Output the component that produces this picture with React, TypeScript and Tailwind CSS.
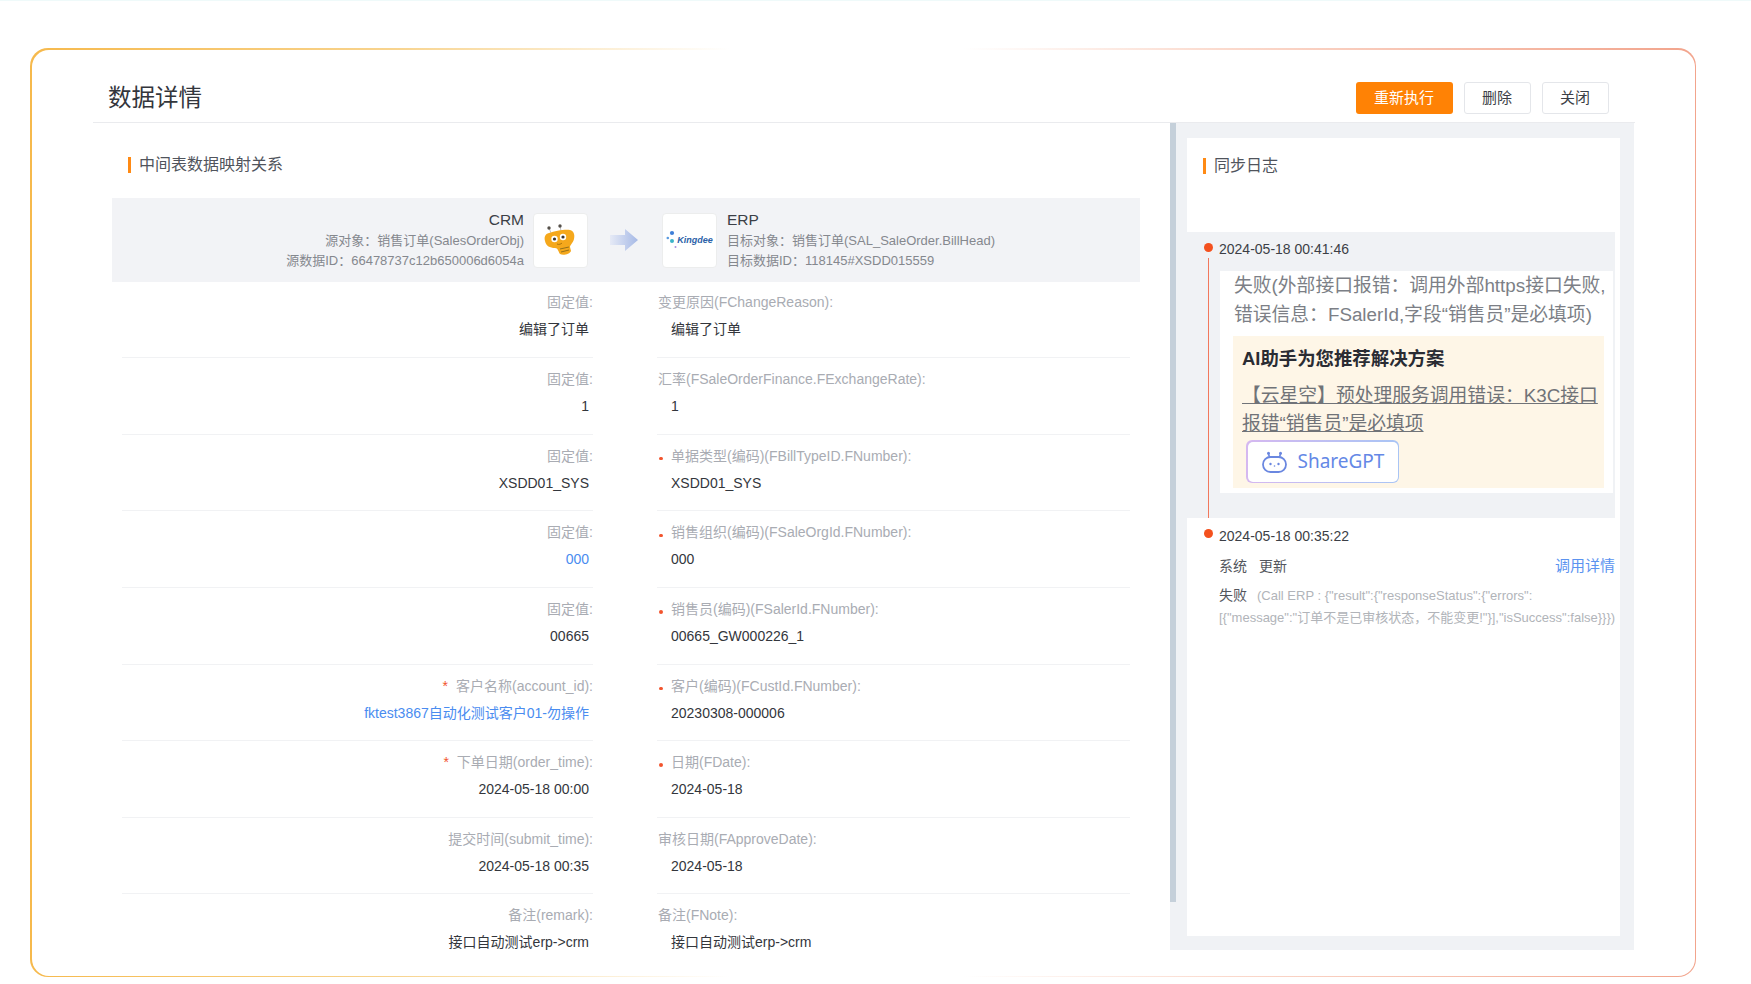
import React from "react";

const font = "font-['Liberation_Sans','Noto_Sans_CJK_SC',sans-serif]";

type Row = {
  leftLabel: string;
  leftValue: string;
  leftReq?: boolean;
  leftBlue?: boolean;
  rightLabel: string;
  rightValue: string;
  rightReq?: boolean;
};

const rows: Row[] = [
  { leftLabel: "固定值:", leftValue: "编辑了订单", rightLabel: "变更原因(FChangeReason):", rightValue: "编辑了订单" },
  { leftLabel: "固定值:", leftValue: "1", rightLabel: "汇率(FSaleOrderFinance.FExchangeRate):", rightValue: "1" },
  { leftLabel: "固定值:", leftValue: "XSDD01_SYS", rightLabel: "单据类型(编码)(FBillTypeID.FNumber):", rightValue: "XSDD01_SYS", rightReq: true },
  { leftLabel: "固定值:", leftValue: "000", leftBlue: true, rightLabel: "销售组织(编码)(FSaleOrgId.FNumber):", rightValue: "000", rightReq: true },
  { leftLabel: "固定值:", leftValue: "00665", rightLabel: "销售员(编码)(FSalerId.FNumber):", rightValue: "00665_GW000226_1", rightReq: true },
  { leftLabel: "客户名称(account_id):", leftValue: "fktest3867自动化测试客户01-勿操作", leftReq: true, leftBlue: true, rightLabel: "客户(编码)(FCustId.FNumber):", rightValue: "20230308-000006", rightReq: true },
  { leftLabel: "下单日期(order_time):", leftValue: "2024-05-18 00:00", leftReq: true, rightLabel: "日期(FDate):", rightValue: "2024-05-18", rightReq: true },
  { leftLabel: "提交时间(submit_time):", leftValue: "2024-05-18 00:35", rightLabel: "审核日期(FApproveDate):", rightValue: "2024-05-18" },
  { leftLabel: "备注(remark):", leftValue: "接口自动测试erp->crm", rightLabel: "备注(FNote):", rightValue: "接口自动测试erp->crm" },
];

function SectionTitle({ text }: { text: string }) {
  return (
    <div className="flex items-center gap-[8px] h-[16px]">
      <span className="w-[3px] h-[16px] bg-[#ff8a14]" />
      <span className="text-[16px] leading-[16px] text-[#50545c]">{text}</span>
    </div>
  );
}

function BeeLogo() {
  return (
    <svg width="53" height="53" viewBox="1 1 53 53">
      <path d="M16 15 L18 20 M27 13 L28 18" stroke="#a8a8a8" strokeWidth="0.7" />
      <circle cx="16" cy="15" r="1.7" fill="#55504a" />
      <circle cx="27" cy="13" r="1.7" fill="#55504a" />
      <path d="M16 20 C22 18 32 16 37 17 C41 18 42 22 41 26 C40 30 37 32 37 34 L38 38 C37 41 30 43 27 41 C25 38 25 35 22 35 C17 35 13 33 12 28 C11 24 12 21 16 20 Z" fill="#f5a81c" />
      <circle cx="21.5" cy="26" r="3.2" fill="#fff" />
      <circle cx="30" cy="24" r="3.2" fill="#fff" />
      <circle cx="21.5" cy="26" r="1.6" fill="#3a3530" />
      <circle cx="30" cy="24" r="1.6" fill="#3a3530" />
      <path d="M24 31 C26 32 28 31 29 30" stroke="#a56d08" strokeWidth="0.9" fill="none" />
      <path d="M27 36 L36 34 M28 39 L36 37" stroke="#8a6a1a" strokeWidth="0.9" />
    </svg>
  );
}

function KingdeeLogo() {
  return (
    <div className="flex items-center">
      <svg width="11" height="20" viewBox="0 0 11 20" className="shrink-0">
        <circle cx="6" cy="3" r="2.1" fill="#3f7fd8" />
        <circle cx="1.8" cy="8" r="1.3" fill="#5a9ae0" />
        <circle cx="6" cy="11" r="2" fill="#3cb4c8" />
        <circle cx="9.5" cy="17" r="1" fill="#a98fe0" />
      </svg>
      <span className="italic font-bold text-[9px] leading-none text-[#2a5fa8] font-['Liberation_Sans',sans-serif]">Kingdee</span>
    </div>
  );
}

function BotIcon() {
  return (
    <svg width="25" height="22" viewBox="0 0 25 22" fill="none">
      <path d="M7.5 6 L6.5 3 M17.5 6 L18.5 3" stroke="#6a87e0" strokeWidth="1.6" />
      <circle cx="6.5" cy="2.2" r="1.5" fill="#6a87e0" />
      <circle cx="18.5" cy="2.2" r="1.5" fill="#6a87e0" />
      <rect x="1" y="6" width="23" height="15" rx="7.5" stroke="#6a87e0" strokeWidth="1.8" />
      <circle cx="8.5" cy="13" r="1.2" fill="#6a87e0" />
      <circle cx="16.5" cy="13" r="1.2" fill="#6a87e0" />
      <circle cx="12.5" cy="15" r="0.8" fill="#6a87e0" />
    </svg>
  );
}

function MappingRow({ row, first }: { row: Row; first: boolean }) {
  const height = first ? "h-[76px] pt-[10px]" : "h-[76.65px] pt-[11px]";
  return (
    <div className="flex gap-[64px] ml-[29px]">
      <div className={`w-[471px] ${height} border-b border-[#f1f2f4] text-right`}>
        <div className="text-[14px] leading-[20px] text-[#a9acb3]">
          {row.leftReq && <span className="text-[#f2542d] mr-[8px]">*</span>}
          {row.leftLabel}
        </div>
        <div className={`mt-[7px] pr-[4px] text-[14px] leading-[20px] whitespace-nowrap ${row.leftBlue ? "text-[#4a8cf0]" : "text-[#33363c]"}`}>
          {row.leftValue}
        </div>
      </div>
      <div className={`w-[473px] ${height} border-b border-[#f1f2f4] pl-[1px]`}>
        <div className="flex items-center text-[14px] leading-[20px] text-[#a9acb3]">
          {row.rightReq && <span className="w-[3.5px] h-[3.5px] mt-[6px] mr-[8.5px] ml-[1px] rounded-full bg-[#f2542d]" />}
          {row.rightLabel}
        </div>
        <div className="mt-[7px] pl-[13px] text-[14px] leading-[20px] text-[#33363c]">{row.rightValue}</div>
      </div>
    </div>
  );
}

export default function App() {
  return (
    <div className={`h-[984px] w-[1751px] overflow-hidden bg-white border-t border-[#effafa] pt-[47px] pl-[30px] ${font}`}>
      {/* border is a gradient showing through the padding */}
      <div className="w-[1666px] h-[929px] rounded-[18px] p-[1.5px] bg-[linear-gradient(to_right,#f6b94c_0%,#f8d48f_22%,#ffffff_42%,#ffffff_56%,#fbd9cc_72%,#f2a48c_100%)]">
        <div className="w-full h-full rounded-[17px] bg-white pl-[61.5px] pr-[60px]">
          <div className="flex items-center justify-between h-[73.5px] border-b border-[#eaebee]">
            <h1 className="ml-[15px] mt-[24px] text-[23.5px] leading-[30px] text-[#33363c]">数据详情</h1>
            <div className="flex gap-[11px] mr-[26px] mt-[24px]">
              <button className="w-[97px] h-[32px] rounded-[3px] bg-[#ff8205] text-white text-[15px]">重新执行</button>
              <button className="w-[67px] h-[32px] rounded-[3px] border border-[#e4e6ea] bg-white text-[#3c3f46] text-[15px]">删除</button>
              <button className="w-[67px] h-[32px] rounded-[3px] border border-[#e4e6ea] bg-white text-[#3c3f46] text-[15px]">关闭</button>
            </div>
          </div>

          <div className="flex h-[827px]">
            <div className="w-[1077px] overflow-hidden">
              <div className="pt-[34px] pl-[35px] pb-[25px]">
                <SectionTitle text="中间表数据映射关系" />
              </div>
              <div className="ml-[19px] w-[1028px] h-[84px] bg-[#f2f3f6] flex items-center">
                <div className="w-[412px] text-right">
                  <div className="text-[15.5px] leading-[22px] text-[#3c3f46]">CRM</div>
                  <div className="text-[13px] leading-[20px] text-[#85888e]">源对象：销售订单(SalesOrderObj)</div>
                  <div className="text-[13px] leading-[20px] text-[#85888e]">源数据ID：66478737c12b650006d6054a</div>
                </div>
                <div className="ml-[9px] w-[55px] h-[55px] rounded-[4px] bg-white border border-[#eceded] flex items-center justify-center">
                  <BeeLogo />
                </div>
                <svg width="28" height="22" viewBox="0 0 28 22" className="ml-[22px]">
                  <defs>
                    <linearGradient id="arrowFill" x1="0" x2="1" y1="0" y2="0">
                      <stop offset="0" stopColor="#e6eaf6" />
                      <stop offset="1" stopColor="#a6b9e6" />
                    </linearGradient>
                  </defs>
                  <path d="M0 6 H15 V0 L28 11 L15 22 V16 H0 Z" fill="url(#arrowFill)" />
                </svg>
                <div className="ml-[24px] w-[55px] h-[55px] rounded-[4px] bg-white border border-[#eceded] flex items-center justify-center">
                  <KingdeeLogo />
                </div>
                <div className="ml-[10px]">
                  <div className="text-[15.5px] leading-[22px] text-[#3c3f46]">ERP</div>
                  <div className="text-[13px] leading-[20px] text-[#85888e]">目标对象：销售订单(SAL_SaleOrder.BillHead)</div>
                  <div className="text-[13px] leading-[20px] text-[#85888e]">目标数据ID：118145#XSDD015559</div>
                </div>
              </div>
              {rows.map((row, i) => (
                <MappingRow key={i} row={row} first={i === 0} />
              ))}
            </div>

            <div className="w-[464px] h-full bg-[#f0f2f5] flex">
              <div className="w-[6px] h-full">
                <div className="w-full h-[779px] bg-[#c5d0da]" />
              </div>
              <div className="ml-[11px] mt-[15px] w-[433px] h-[798px] bg-white">
                <div className="h-[94px] pt-[20px] pl-[16px]">
                  <SectionTitle text="同步日志" />
                </div>

                <div className="flex w-[428px] h-[286px] bg-[#f0f2f5]">
                  <div className="w-[32px] flex flex-col">
                    <span className="ml-[16.5px] mt-[10.5px] w-[9px] h-[9px] rounded-full bg-[#f4511e]" />
                    <span className="ml-[20.5px] mt-[6px] w-[1.5px] flex-1 bg-[#f2785c]" />
                  </div>
                  <div className="pt-[7px]">
                    <div className="text-[14px] leading-[20px] text-[#3c3f46]">2024-05-18 00:41:46</div>
                    <div className="mt-[12px] ml-[1px] w-[393px] h-[222px] bg-white">
                      <div className="pl-[14px] text-[18.8px] leading-[29px] text-[#7c7f86] whitespace-nowrap">
                        失败(外部接口报错：调用外部https接口失败,
                        <br />
                        错误信息：FSalerId,字段“销售员”是必填项)
                      </div>
                      <div className="mt-[7px] ml-[13px] w-[371px] h-[152px] bg-[#fef6e7] pt-[9px] pl-[9px]">
                        <div className="text-[18.4px] leading-[28px] font-semibold text-[#2a2c33]">AI助手为您推荐解决方案</div>
                        <div className="mt-[9px] text-[18.8px] leading-[28px] underline text-[#707378] whitespace-nowrap">
                          【云星空】预处理服务调用错误：K3C接口
                          <br />
                          报错“销售员”是必填项
                        </div>
                        <button className="mt-[2px] ml-[4px] w-[153px] h-[43px] rounded-[6px] p-[1.5px] bg-[linear-gradient(to_right,#d5b8f0,#a9c5f5)]">
                          <span className="w-full h-full rounded-[5px] bg-white flex items-center pl-[14px] gap-[11px]">
                            <BotIcon />
                            <span className="text-[19px] leading-none text-[#6488e6] font-['Noto_Sans',sans-serif]">ShareGPT</span>
                          </span>
                        </button>
                      </div>
                    </div>
                  </div>
                </div>

                <div className="flex">
                  <div className="w-[32px]">
                    <span className="block ml-[16.5px] mt-[10.5px] w-[9px] h-[9px] rounded-full bg-[#f4511e]" />
                  </div>
                  <div className="w-[396px] pt-[8px]">
                    <div className="text-[14px] leading-[20px] text-[#3c3f46]">2024-05-18 00:35:22</div>
                    <div className="mt-[10px] flex justify-between items-center">
                      <div className="text-[14px] leading-[20px] text-[#53565d]">
                        系统<span className="ml-[12px]">更新</span>
                      </div>
                      <span className="text-[15px] leading-[20px] text-[#5b93f0]">调用详情</span>
                    </div>
                    <div className="mt-[9px] text-[14px] leading-[20px] text-[#53565d] whitespace-nowrap">
                      失败<span className="ml-[10px] text-[13px] text-[#b1b4b9]">{'(Call ERP : {"result":{"responseStatus":{"errors":'}</span>
                    </div>
                    <div className="mt-[2px] text-[13px] leading-[20px] text-[#b1b4b9] whitespace-nowrap">
                      {'[{"message":"订单不是已审核状态，不能变更!"}],"isSuccess":false}}})'}
                    </div>
                  </div>
                </div>
              </div>
            </div>
          </div>
        </div>
      </div>
    </div>
  );
}
